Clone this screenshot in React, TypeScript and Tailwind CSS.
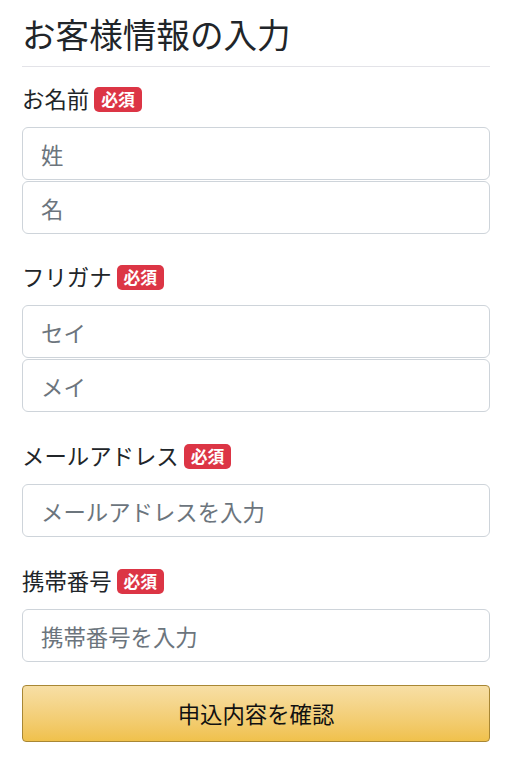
import React from "react";

const font = { fontFamily: '"Noto Sans CJK JP", "Noto Sans", sans-serif' };

const Badge = () => (
  <span className="ml-[5px] inline-flex h-[25px] items-center rounded-[5px] bg-[#dc3545] px-[7px] text-[16.8px] font-bold leading-none text-white">
    必須
  </span>
);

const Label = ({ text }: { text: string }) => (
  <div className="mb-[11px] flex h-[34px] items-center text-[22.4px] text-[#212529]">
    <span>{text}</span>
    <Badge />
  </div>
);

const Input = ({ placeholder }: { placeholder: string }) => (
  <input
    type="text"
    placeholder={placeholder}
    className="block h-[53px] w-full rounded-[6px] border border-[#ced4da] bg-white px-[18px] text-[22.4px] text-[#495057] placeholder:text-[#6c757d] outline-none"
  />
);

export default function App() {
  return (
    <div className="min-h-[762px] bg-white px-[22px] pt-[14px]" style={font}>
      <h1 className="border-b border-[#e3e3e8] pb-[12px] text-[33.6px] leading-[40px] font-normal text-[#212529]">
        お客様情報の入力
      </h1>

      <div className="pt-[15px]">
        <Label text="お名前" />
        <div className="flex flex-col gap-[1px]">
          <Input placeholder="姓" />
          <Input placeholder="名" />
        </div>
      </div>

      <div className="pt-[26px]">
        <Label text="フリガナ" />
        <div className="flex flex-col gap-[1px]">
          <Input placeholder="セイ" />
          <Input placeholder="メイ" />
        </div>
      </div>

      <div className="pt-[27px]">
        <Label text="メールアドレス" />
        <Input placeholder="メールアドレスを入力" />
      </div>

      <div className="pt-[27px]">
        <Label text="携帯番号" />
        <Input placeholder="携帯番号を入力" />
      </div>

      <button
        type="button"
        className="mt-[23px] block h-[57px] w-full rounded-[4px] border border-[#a88734] bg-gradient-to-b from-[#f7dfa5] to-[#f0c14b] text-[22.4px] text-[#111]"
      >
        申込内容を確認
      </button>
    </div>
  );
}
